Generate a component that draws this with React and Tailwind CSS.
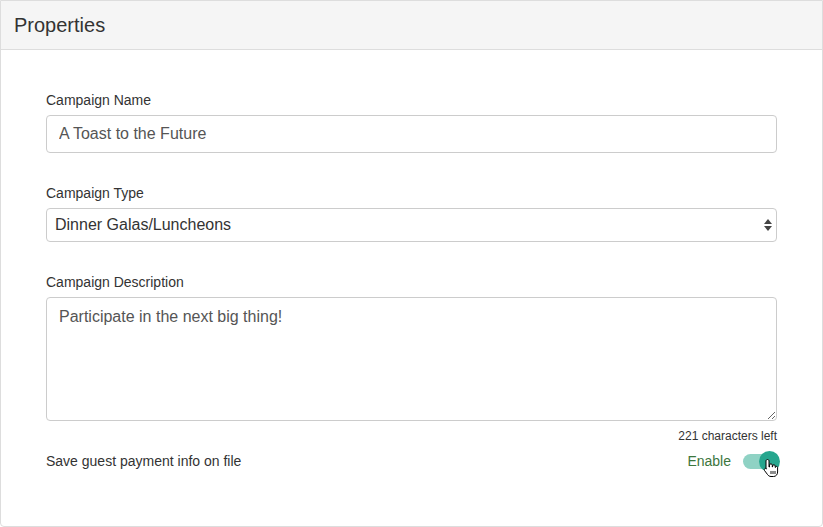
import { useState } from 'react'

export default function App() {
  const [name, setName] = useState('A Toast to the Future')
  const [type, setType] = useState('Dinner Galas/Luncheons')
  const [desc, setDesc] = useState('Participate in the next big thing!')
  const [enabled, setEnabled] = useState(true)

  return (
    <div className="w-[823px] h-[527px] bg-white font-['Liberation_Sans',Arial,sans-serif] text-[#333]">
      <div className="h-[527px] border border-[#ddd] rounded-b-[4px] flex flex-col">
        {/* Header */}
        <div className="h-[49px] bg-[#f5f5f5] border-b border-[#ddd] flex items-center px-[13px]">
          <h2 className="text-[20px] text-[#333]">Properties</h2>
        </div>

        {/* Body */}
        <div className="pt-[41px] pl-[45px] pr-[45px]">
          <label className="block text-[14px] leading-[18px] mb-[6px]">Campaign Name</label>
          <input
            type="text"
            value={name}
            onChange={(e) => setName(e.target.value)}
            className="w-full h-[38px] border border-[#ccc] rounded-[4px] px-[12px] text-[16px] text-[#555] outline-none"
          />

          <label className="block text-[14px] leading-[18px] mt-[31px] mb-[6px]">Campaign Type</label>
          <div className="relative">
            <select
              value={type}
              onChange={(e) => setType(e.target.value)}
              className="w-full h-[34px] appearance-none border border-[#ccc] rounded-[4px] pl-[8px] text-[16px] text-[#333] bg-white outline-none"
            >
              <option>Dinner Galas/Luncheons</option>
              <option>Auctions</option>
              <option>Walkathons</option>
            </select>
            <svg className="absolute right-[4px] top-[10px] pointer-events-none" width="10" height="14" viewBox="0 0 10 14">
              <path d="M5 1 L9 6 L1 6 Z" fill="#444" />
              <path d="M5 13 L9 8 L1 8 Z" fill="#444" />
            </svg>
          </div>

          <label className="block text-[14px] leading-[18px] mt-[31px] mb-[6px]">Campaign Description</label>
          <textarea
            value={desc}
            onChange={(e) => setDesc(e.target.value)}
            className="block w-full h-[124px] border border-[#ccc] rounded-[4px] px-[12px] pt-[8px] text-[16px] leading-[22px] text-[#555] outline-none"
          />
          <p className="text-right text-[12px] leading-[14px] mt-[8px] text-[#333]">221 characters left</p>

          <div className="flex items-center justify-between mt-[8px] h-[20px]">
            <span className="text-[14px]">Save guest payment info on file</span>
            <div className="flex items-center gap-[12px] mr-[-3px]">
              <span className="text-[14px] text-[#3c763d]">Enable</span>
              <button
                onClick={() => setEnabled(!enabled)}
                className="relative w-[37px] h-[20px] flex items-center"
              >
                <span className={`block w-[30px] h-[15px] rounded-full ${enabled ? 'bg-[#8fd2c4]' : 'bg-[#ccc]'}`} />
                <span
                  className={`absolute top-0 w-[21px] h-[21px] rounded-full ${enabled ? 'left-[16px] bg-[#26a68e]' : 'left-0 bg-[#f1f1f1]'}`}
                />
                <svg className="absolute left-[20px] top-[7px]" width="16" height="20" viewBox="0 0 16 20">
                  <path
                    d="M4.5 1.5 C5.3 1.5 6 2.1 6 3 L6 9 L6.5 9 L6.5 7.2 C6.5 6.4 7.1 5.8 7.9 5.8 C8.7 5.8 9.3 6.4 9.3 7.2 L9.3 9 L9.6 9 L9.6 8 C9.6 7.3 10.2 6.7 10.9 6.7 C11.6 6.7 12.2 7.3 12.2 8 L12.2 9.4 L12.5 9.4 C12.5 8.8 13 8.4 13.6 8.4 C14.2 8.4 14.6 8.9 14.6 9.5 L14.6 14 C14.6 16.5 13 18.5 10.5 18.5 L8 18.5 C6.4 18.5 5.4 17.7 4.5 16.5 L1.5 12.5 C1 11.8 1.2 11 1.8 10.6 C2.4 10.2 3.1 10.4 3.6 11 L3 10.3 L3 3 C3 2.1 3.7 1.5 4.5 1.5 Z"
                    fill="#fff"
                    stroke="#000"
                    strokeWidth="1"
                    strokeLinejoin="round"
                  />
                  <path d="M8 13 L8 16 M10 13 L10 16 M12 13 L12 16" stroke="#000" strokeWidth="0.9" />
                </svg>
              </button>
            </div>
          </div>
        </div>
      </div>
    </div>
  )
}
